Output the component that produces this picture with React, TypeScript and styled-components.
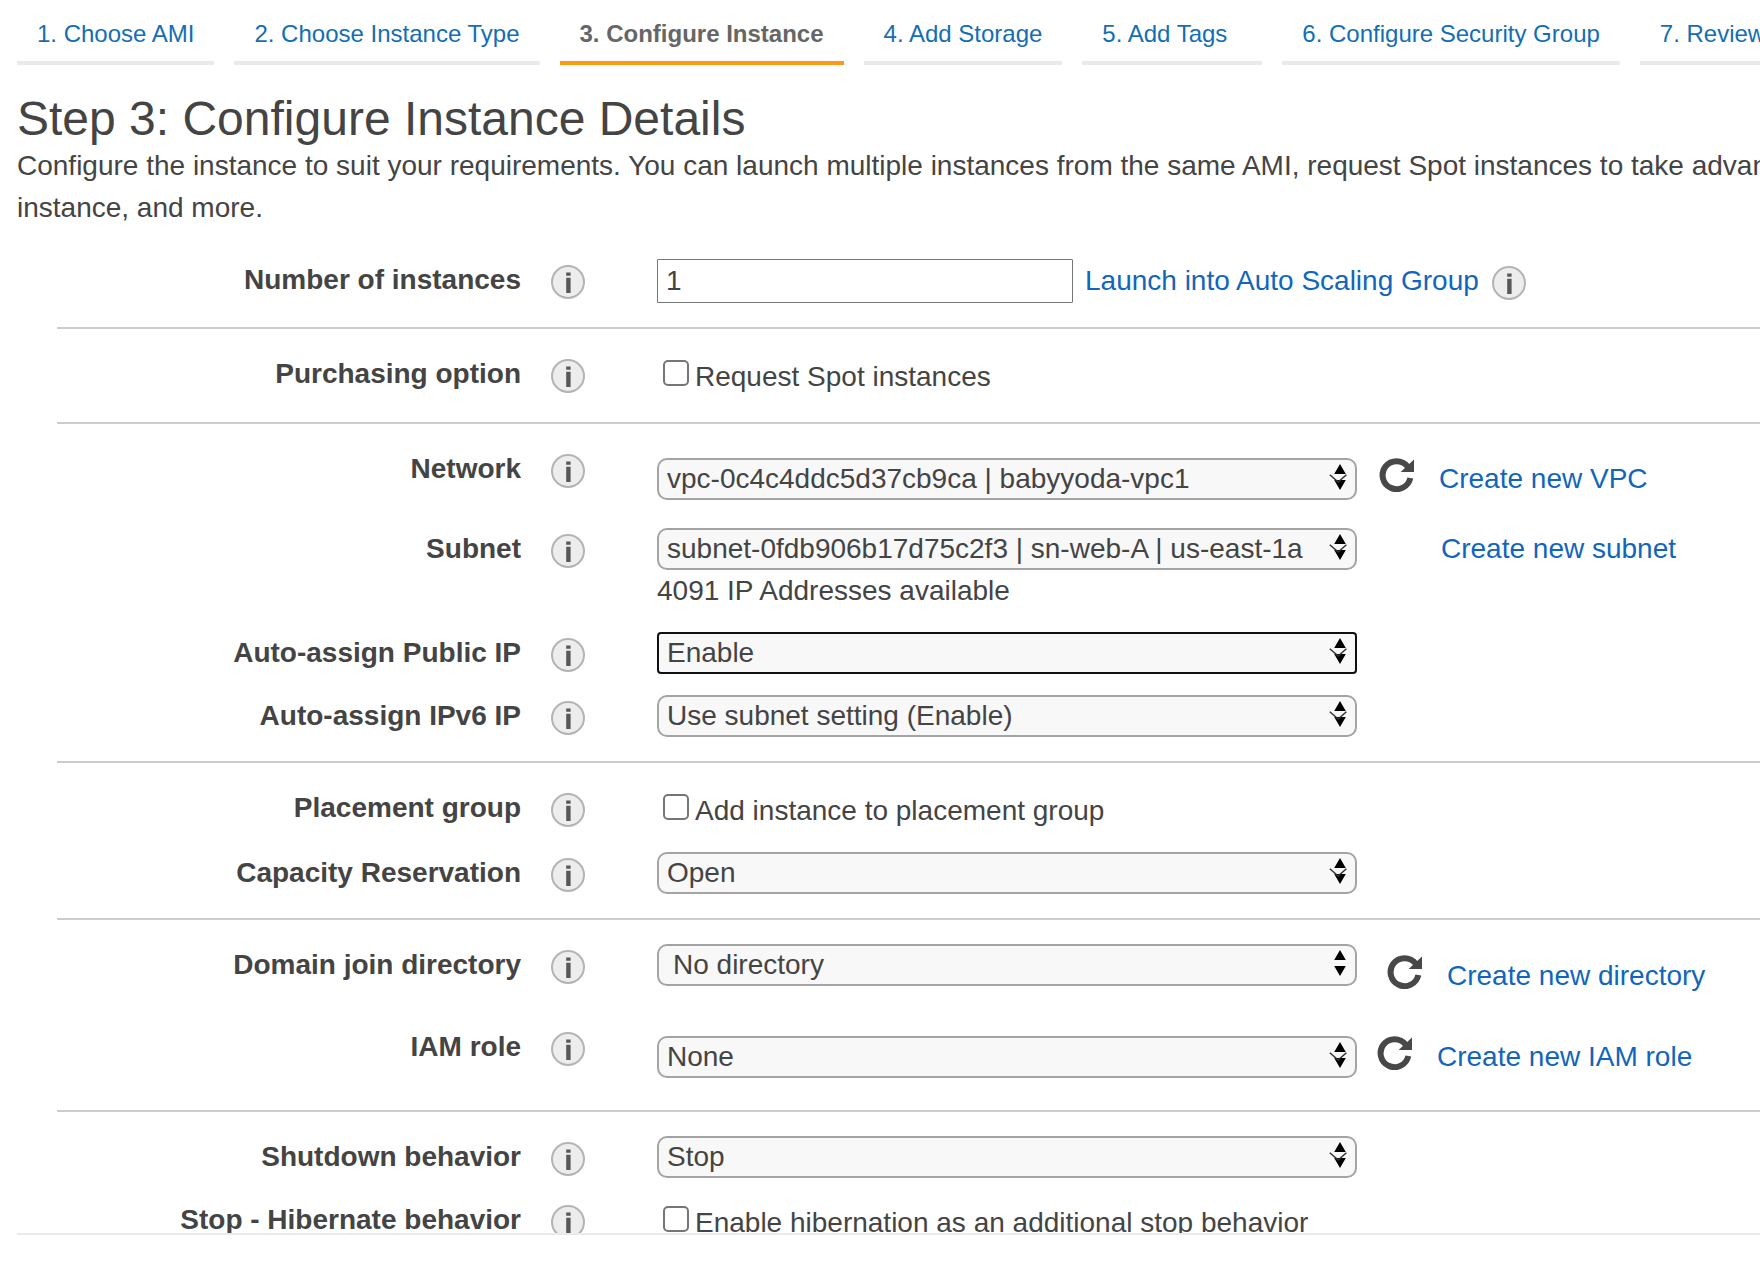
import React from "react";
import styled, { createGlobalStyle } from "styled-components";

const GlobalStyle = createGlobalStyle`
  *, *::before, *::after { box-sizing: border-box; }
  body {
    margin: 0;
    background: #fff;
    color: #444;
    font-family: "Liberation Sans", Arial, Helvetica, sans-serif;
    font-size: 28px;
    line-height: 42px;
  }
`;

const Page = styled.div`
  display: flex;
  flex-direction: column;
  height: 100vh;
  padding-left: 17px;
  overflow: hidden;
`;

const Steps = styled.nav`
  display: flex;
  gap: 20px;
  flex-shrink: 0;
`;

const Step = styled.a<{ $active?: boolean }>`
  flex-shrink: 0;
  min-width: 180px;
  padding: 14px 20px 7px;
  border-bottom: 4px solid ${(p) => (p.$active ? "#ff9914" : "#eaeaea")};
  color: ${(p) => (p.$active ? "#666" : "#146eb4")};
  font-size: 24px;
  font-weight: ${(p) => (p.$active ? "bold" : "normal")};
  line-height: 40px;
  text-decoration: none;
  white-space: nowrap;
`;

const Title = styled.h1`
  flex-shrink: 0;
  margin: 28px 0 0;
  font-size: 48px;
  font-weight: normal;
  line-height: 52px;
`;

const Intro = styled.p`
  flex-shrink: 0;
  margin: 0;
  white-space: nowrap;
`;

const FormArea = styled.form`
  flex: 1;
  min-height: 0;
  margin-top: 6px;
  padding-left: 40px;
  overflow: hidden;
  border-bottom: 2px solid #eaeaea;
`;

const Footer = styled.footer`
  flex-shrink: 0;
  height: 47px;
`;

const Section = styled.section`
  padding: 24px 0;
  border-bottom: 2px solid #ccc;

  &:last-child {
    border-bottom: 0;
  }
`;

const Row = styled.div<{ $after?: number }>`
  display: grid;
  grid-template-columns: 464px 34px 1fr;
  align-items: start;
  margin-bottom: ${(p) => p.$after ?? 0}px;
`;

const RowLabel = styled.label`
  font-weight: bold;
  line-height: 42px;
  text-align: right;
`;

const InfoButton = styled.button`
  display: block;
  flex-shrink: 0;
  width: 34px;
  height: 34px;
  padding: 0;
  border: 0;
  background: none;
  cursor: pointer;

  svg {
    display: block;
  }
`;

const InfoCell = styled.div`
  padding-top: 6px;
  margin-left: 30px;
`;

const Field = styled.div<{ $drop?: boolean }>`
  padding-top: ${(p) => (p.$drop ? 10 : 0)}px;
  margin-left: 102px;
`;

const Line = styled.div`
  display: flex;
  align-items: flex-start;
`;

const TextInput = styled.input`
  width: 416px;
  height: 44px;
  padding: 0 8px;
  border: 1px solid #767676;
  border-radius: 1px;
  background: #fff;
  color: inherit;
  font: inherit;
`;

const InlineGroup = styled.span`
  display: flex;
  align-items: center;
  gap: 13px;
  height: 44px;
  margin-left: 12px;

  button {
    margin-top: 3px;
  }
`;

const Link = styled.a`
  color: #1166bb;
  text-decoration: none;
  white-space: nowrap;
`;

const CheckLabel = styled.label`
  display: flex;
  align-items: center;
  gap: 6px;
  height: 45px;
  margin-left: 6px;
  line-height: 47px;
`;

const CheckBox = styled.input`
  appearance: none;
  width: 26px;
  height: 26px;
  margin: 0 0 6px;
  border: 2px solid #767676;
  border-radius: 5px;
  background: #fff;

  &:checked {
    background: #1166bb;
  }
`;

const CheckText = styled.span`
  padding-top: 1px;
`;

const SelectBox = styled.div`
  position: relative;
  flex-shrink: 0;
  width: 700px;
  height: 42px;

  svg {
    position: absolute;
    top: 0;
    right: 8px;
    pointer-events: none;
  }
`;

const Select = styled.select<{ $focused?: boolean; $inset?: boolean }>`
  appearance: none;
  display: block;
  width: 100%;
  height: 42px;
  padding: 0 40px 0 ${(p) => (p.$inset ? 14 : 8)}px;
  border: 2px solid ${(p) => (p.$focused ? "#101014" : "#a4a4a4")};
  border-radius: ${(p) => (p.$focused ? 4 : 10)}px;
  background: #f8f8f8;
  color: inherit;
  font: inherit;
  line-height: 38px;
`;

const Hint = styled.div`
  line-height: 41px;
`;

const Actions = styled.div<{ $space: number; $drop?: boolean }>`
  display: flex;
  align-items: center;
  gap: 24px;
  padding-top: ${(p) => (p.$drop ? 11 : 0)}px;
  margin-left: ${(p) => p.$space}px;
`;

const RefreshButton = styled.button`
  width: 36px;
  height: 34px;
  padding: 0;
  margin-bottom: 8px;
  border: 0;
  background: none;
  cursor: pointer;

  svg {
    display: block;
  }
`;

function Info({ about }: { about: string }) {
  return (
    <InfoButton type="button" aria-label={`About ${about}`}>
      <svg width="34" height="34" viewBox="0 0 34 34">
        <circle cx="17" cy="17" r="16" fill="#ededed" stroke="#b4b4b4" strokeWidth="2" />
        <path d="M15.2 7.6h4.4v3.2h-4.4zM15.2 12.8h4.4V28h-4.4z" fill="#585858" />
      </svg>
    </InfoButton>
  );
}

function Refresh({ what }: { what: string }) {
  return (
    <RefreshButton type="button" aria-label={`Refresh ${what}`}>
      <svg width="36" height="34" viewBox="0 0 36 34">
        <path d="M31.3 20A14 14 0 1 1 28.6 8.500" fill="none" stroke="#484848" strokeWidth="6" />
        <path d="M21.600 14L35 1.500V14z" fill="#484848" />
      </svg>
    </RefreshButton>
  );
}

function Arrows({ chevron }: { chevron: boolean }) {
  return (
    <svg width="20" height="42" viewBox="0 0 20 42" aria-hidden="true">
      <path d="M11 6l5.8 10H5.2zM11 32l5.8-10H5.2z" fill="#000" />
      {chevron && (
        <path d="M.8 16.800l8.4 7.200L17.400 16.800" fill="none" stroke="#333" strokeWidth="1.500" />
      )}
    </svg>
  );
}

interface FormRowProps {
  id: string;
  label: string;
  after?: number;
  drop?: boolean;
  children: React.ReactNode;
}

function FormRow({ id, label, after, drop, children }: FormRowProps) {
  return (
    <Row $after={after}>
      <RowLabel htmlFor={id}>{label}</RowLabel>
      <InfoCell>
        <Info about={label} />
      </InfoCell>
      <Field $drop={drop}>{children}</Field>
    </Row>
  );
}

interface DropDownProps {
  id: string;
  value: string;
  focused?: boolean;
  plain?: boolean;
}

function DropDown({ id, value, focused, plain }: DropDownProps) {
  return (
    <SelectBox>
      <Select id={id} $focused={focused} $inset={plain}>
        <option>{value}</option>
      </Select>
      <Arrows chevron={!plain} />
    </SelectBox>
  );
}

function Check({ id, text }: { id: string; text: string }) {
  return (
    <CheckLabel>
      <CheckBox id={id} type="checkbox" />
      <CheckText>{text}</CheckText>
    </CheckLabel>
  );
}

const steps = [
  "1. Choose AMI",
  "2. Choose Instance Type",
  "3. Configure Instance",
  "4. Add Storage",
  "5. Add Tags",
  "6. Configure Security Group",
  "7. Review",
];

export default function App() {
  return (
    <Page>
      <GlobalStyle />
      <Steps>
        {steps.map((step, i) => (
          <Step key={step} href="#" $active={i === 2}>
            {step}
          </Step>
        ))}
      </Steps>
      <Title>Step 3: Configure Instance Details</Title>
      <Intro>
        Configure the instance to suit your requirements. You can launch multiple instances from the
        same AMI, request Spot instances to take advantage
        <br />
        instance, and more.
      </Intro>

      <FormArea>
        <Section>
          <FormRow id="count" label="Number of instances">
            <Line>
              <TextInput id="count" type="text" defaultValue="1" />
              <InlineGroup>
                <Link href="#">Launch into Auto Scaling Group</Link>
                <Info about="Auto Scaling Group" />
              </InlineGroup>
            </Line>
          </FormRow>
        </Section>

        <Section>
          <FormRow id="spot" label="Purchasing option">
            <Check id="spot" text="Request Spot instances" />
          </FormRow>
        </Section>

        <Section>
          <FormRow id="network" label="Network" drop after={28}>
            <Line>
              <DropDown id="network" value="vpc-0c4c4ddc5d37cb9ca | babyyoda-vpc1" />
              <Actions $space={22}>
                <Refresh what="networks" />
                <Link href="#">Create new VPC</Link>
              </Actions>
            </Line>
          </FormRow>
          <FormRow id="subnet" label="Subnet" after={21}>
            <Line>
              <DropDown id="subnet" value="subnet-0fdb906b17d75c2f3 | sn-web-A | us-east-1a" />
              <Actions $space={84}>
                <Link href="#">Create new subnet</Link>
              </Actions>
            </Line>
            <Hint>4091 IP Addresses available</Hint>
          </FormRow>
          <FormRow id="public-ip" label="Auto-assign Public IP" after={21}>
            <DropDown id="public-ip" value="Enable" focused />
          </FormRow>
          <FormRow id="ipv6" label="Auto-assign IPv6 IP">
            <DropDown id="ipv6" value="Use subnet setting (Enable)" />
          </FormRow>
        </Section>

        <Section>
          <FormRow id="placement" label="Placement group" after={20}>
            <Check id="placement" text="Add instance to placement group" />
          </FormRow>
          <FormRow id="capacity" label="Capacity Reservation">
            <DropDown id="capacity" value="Open" />
          </FormRow>
        </Section>

        <Section>
          <FormRow id="directory" label="Domain join directory" after={29}>
            <Line>
              <DropDown id="directory" value="No directory" plain />
              <Actions $space={30} $drop>
                <Refresh what="directories" />
                <Link href="#">Create new directory</Link>
              </Actions>
            </Line>
          </FormRow>
          <FormRow id="iam" label="IAM role" drop after={8}>
            <Line>
              <DropDown id="iam" value="None" />
              <Actions $space={20}>
                <Refresh what="roles" />
                <Link href="#">Create new IAM role</Link>
              </Actions>
            </Line>
          </FormRow>
        </Section>

        <Section>
          <FormRow id="shutdown" label="Shutdown behavior" after={21}>
            <DropDown id="shutdown" value="Stop" />
          </FormRow>
          <FormRow id="hibernate" label="Stop - Hibernate behavior">
            <Check id="hibernate" text="Enable hibernation as an additional stop behavior" />
          </FormRow>
        </Section>
      </FormArea>
      <Footer />
    </Page>
  );
}
